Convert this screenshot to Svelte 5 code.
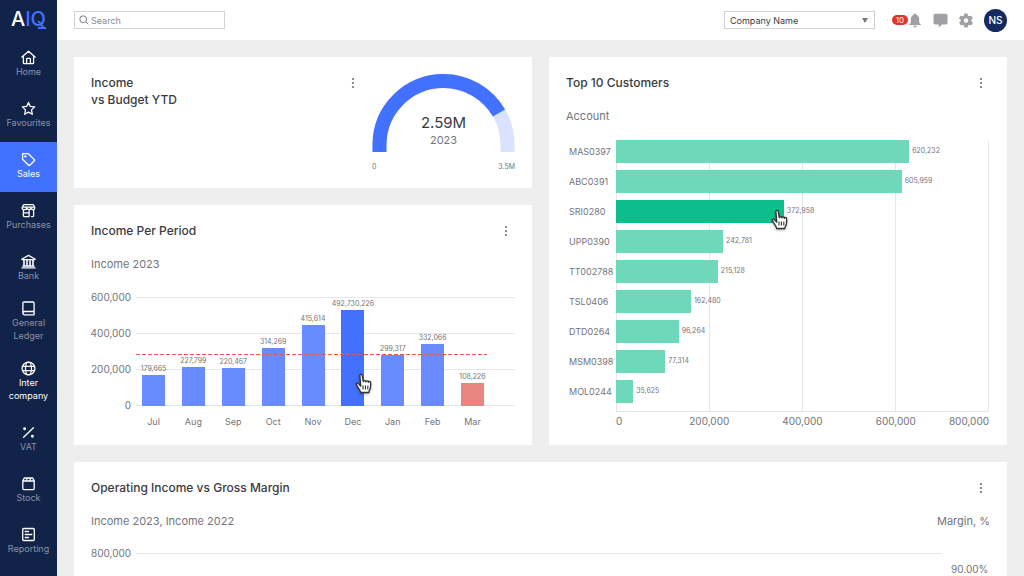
<script lang="ts">
	const navItems = [
		{ label: 'Home', icon: 'home' },
		{ label: 'Favourites', icon: 'star' },
		{ label: 'Sales', icon: 'tag', active: true },
		{ label: 'Purchases', icon: 'shop' },
		{ label: 'Bank', icon: 'bank' },
		{ label: 'General Ledger', icon: 'book', tall: true },
		{ label: 'Inter company', icon: 'globe', tall: true, bright: true },
		{ label: 'VAT', icon: 'percent' },
		{ label: 'Stock', icon: 'box' },
		{ label: 'Reporting', icon: 'report' }
	];

	// size is the share of the axis length, in percent
	const periods = [
		{ month: 'Jul', value: '179,665', size: 28 },
		{ month: 'Aug', value: '227,799', size: 36 },
		{ month: 'Sep', value: '220,467', size: 35 },
		{ month: 'Oct', value: '314,269', size: 53 },
		{ month: 'Nov', value: '415,614', size: 74 },
		{ month: 'Dec', value: '492,730,226', size: 88, hover: true },
		{ month: 'Jan', value: '299,317', size: 47 },
		{ month: 'Feb', value: '332,066', size: 57 },
		{ month: 'Mar', value: '108,226', size: 21, low: true }
	];

	const customers = [
		{ account: 'MAS0397', value: '620,232', size: 78.6 },
		{ account: 'ABC0391', value: '605,959', size: 76.6 },
		{ account: 'SRI0280', value: '372,958', size: 45, hover: true },
		{ account: 'UPP0390', value: '242,781', size: 28.7 },
		{ account: 'TT002788', value: '215,128', size: 27.3 },
		{ account: 'TSL0406', value: '162,480', size: 20.1 },
		{ account: 'DTD0264', value: '96,264', size: 16.8 },
		{ account: 'MSM0398', value: '77,314', size: 13.2 },
		{ account: 'MOL0244', value: '35,625', size: 4.6 }
	];

	const incomeTicks = ['600,000', '400,000', '200,000', '0'];
	const customerTicks = ['0', '200,000', '400,000', '600,000', '800,000'];
</script>

{#snippet menuButton(label: string)}
	<button class="menu" aria-label={label}>
		<svg width="4" height="12" viewBox="0 0 4 12" fill="#6e6e76">
			<circle cx="2" cy="2" r="1.1" />
			<circle cx="2" cy="6" r="1.1" />
			<circle cx="2" cy="10" r="1.1" />
		</svg>
	</button>
{/snippet}

{#snippet hand()}
	<svg class="hand" width="18" height="21" viewBox="0 0 18 21">
		<path
			d="M5.8 13.2 3.2 10.4c-.8-.9-2.2-.2-1.8.9.6 1.7 1.5 2.6 2.2 4 .7 1.5 2 2.5 2 4.2h8.2c0-1.8 1.3-2.8 1.6-4.8.2-1.6.3-3.4.2-5.2-.1-1.4-2-1.4-2.2-.2-.1-1.8-2.3-1.9-2.5-.4-.2-1.6-2.4-1.6-2.6-.2L7.2 2.4C6.8.8 4.6 1.2 4.9 2.8Z"
			fill="#fff"
			stroke="#333"
			stroke-width="1.3"
			stroke-linejoin="round"
		/>
		<path d="M8 12.4v4M10.4 12.4v4M12.8 12.4v4" stroke="#333" stroke-width="1.1" />
	</svg>
{/snippet}

<div class="app">
	<aside class="sidebar">
		<a class="logo" href="#home">A<span>IQ</span></a>
		<nav>
			{#each navItems as item}
				<a
					href="#{item.icon}"
					class="nav-item"
					class:active={item.active}
					class:tall={item.tall}
					class:bright={item.bright}
				>
					<svg width="15" height="15" viewBox="0 0 15 15" fill="none" stroke="currentColor" stroke-width="1.3" stroke-linejoin="round" stroke-linecap="round">
						{#if item.icon === 'home'}
							<path d="M.9 7 7.5 1.2 14.1 7M2.4 6v6.8q0 .9.9.9h8.4q.9 0 .9-.9V6M5.6 13.5V9.2q0-.8.8-.8h2.2q.8 0 .8.8v4.3" />
						{:else if item.icon === 'star'}
							<path d="m7.5 1.4 1.8 4 4.4.5-3.2 3 .8 4.4-3.8-2.2-3.8 2.2.8-4.4-3.2-3 4.4-.5Z" />
						{:else if item.icon === 'tag'}
							<path d="M1.6 2.4q0-.8.8-.8h4.4q.5 0 .9.4l5.6 5.6q.6.6 0 1.2l-4.5 4.5q-.6.6-1.2 0L2 7.7q-.4-.4-.4-.9Z" />
							<circle cx="4.4" cy="4.4" r=".5" />
						{:else if item.icon === 'shop'}
							<path d="M3.2 1.6h8.6q.6 0 .9.6l1.2 2.6q0 1.8-1.6 1.8-1.5 0-2-1.2-.6 1.2-2.2 1.2-1 0-1.8-1.2-.6 1.2-2.3 1.2-2.9.1-2.9-1.8l1.2-2.6q.3-.6.9-.6Z" />
							<path d="M1.8 4.2h11.4M5.4 4.2v1.4M9.6 4.2v1.4M2.4 6.6v6.2q0 .8.8.8h4.9V9.8H2.4M8.1 9.8V7.4M12.6 6.6v6.2q0 .8-.8.8h-1.2" />
						{:else if item.icon === 'bank'}
							<path d="M1 5 7.5 1.4 14 5v.6H1ZM1 13.9h13M2 12h11" />
							<path d="M3 6v5.6M6 6v5.6M9 6v5.6M12 6v5.6" stroke-width="1.6" />
						{:else if item.icon === 'book'}
							<path d="M1.9 12V2.2Q1.9 1 3.1 1h8.8q1.2 0 1.2 1.2v11.6H3.7q-1.8 0-1.8-1.8 0-1.5 1.8-1.5h9.4" />
						{:else if item.icon === 'globe'}
							<circle cx="7.5" cy="7.5" r="6.4" />
							<ellipse cx="7.5" cy="7.5" rx="3" ry="6.4" />
							<path d="M1.5 5.3h12M1.5 9.7h12" />
						{:else if item.icon === 'percent'}
							<path d="M2.6 12.3 12.4 2.7" />
							<circle cx="3.6" cy="3.8" r=".8" fill="currentColor" />
							<circle cx="11.4" cy="11.2" r=".8" fill="currentColor" />
						{:else if item.icon === 'box'}
							<path d="M1.8 4.9v7.7q0 1 1 1h9.4q1 0 1-1V4.9L11.7 2H3.3ZM1.8 5h11.4M5.8 2v3M9.2 2v3" />
						{:else}
							<rect x="1.7" y="1.5" width="11.6" height="12" rx="1" />
							<path d="M4.2 4.5h3.3M4.2 7.5h6.6M4.2 10.5h3.3" />
						{/if}
					</svg>
					<span>{item.label}</span>
				</a>
			{/each}
		</nav>
	</aside>

	<div class="page">
		<header class="topbar">
			<label class="search">
				<svg width="10" height="10" viewBox="0 0 10 10" fill="none" stroke="#77777f" stroke-width="1">
					<circle cx="4.2" cy="4.2" r="3.4" />
					<path d="m6.7 6.7 2.6 2.6" />
				</svg>
				<input type="text" placeholder="Search" aria-label="Search" />
			</label>

			<div class="company">
				<select aria-label="Company">
					<option>Company Name</option>
				</select>
				<svg width="6" height="5" viewBox="0 0 6 5"><path d="M0 0h6L3 5Z" fill="#77777f" /></svg>
			</div>

			<button class="icon-button" aria-label="Notifications">
				<span class="badge">10</span>
				<svg width="14" height="15" viewBox="0 0 14 15" fill="#a09fa5">
					<path d="M7 .6c.7 0 1.2.5 1.2 1.2 2 .6 3 2.3 3 4.4v3.2c0 .8 1.8 1.3 1.8 2.7H1c0-1.4 1.800-1.900 1.800-2.700V6.200c0-2.100 1-3.800 3-4.400C5.800 1.100 6.300.6 7 .6ZM5.200 12.800h3.600a1.800 1.600 0 0 1-3.600 0Z" />
				</svg>
			</button>
			<button class="icon-button" aria-label="Messages">
				<svg width="15" height="15" viewBox="0 0 15 15" fill="#a09fa5">
					<path d="M2.2.7h10.6q1.700 0 1.700 1.700v7.300q0 1.700-1.700 1.700H9l-3.300 3v-3H2.200q-1.700 0-1.700-1.700V2.400Q.5.7 2.200.7Z" />
				</svg>
			</button>
			<button class="icon-button" aria-label="Settings">
				<svg width="14" height="15" viewBox="2 2 20 20" fill="#a09fa5">
					<path d="M19.4 13a7.5 7.5 0 0 0 0-2l2.1-1.6c.2-.1.2-.4.1-.6l-2-3.5c-.1-.2-.4-.3-.6-.2l-2.5 1a7.300 7.300 0 0 0-1.700-1l-.4-2.600a.5.5 0 0 0-.5-.5h-4a.5.5 0 0 0-.5.5L9 5.100a7.600 7.600 0 0 0-1.700 1l-2.500-1c-.2-.1-.5 0-.6.2l-2 3.500c-.1.2-.1.5.1.6L4.500 11a7.900 7.900 0 0 0 0 2l-2.100 1.600c-.2.1-.2.4-.1.6l2 3.500c.1.2.4.3.6.2l2.500-1c.5.4 1.100.7 1.700 1l.4 2.600c0 .3.2.5.5.5h4c.3 0 .5-.2.5-.5l.4-2.600a7.300 7.300 0 0 0 1.700-1l2.500 1c.2.1.5 0 .6-.2l2-3.500c.1-.2.1-.5-.1-.6ZM12 15.200a3.200 3.200 0 1 1 0-6.400 3.200 3.200 0 0 1 0 6.400Z" />
				</svg>
			</button>
			<button class="avatar">NS</button>
		</header>

		<main>
			<section class="card budget">
				<h2>Income<br />vs Budget YTD</h2>
				{@render menuButton('Income vs Budget options')}
				<div class="gauge">
					<svg width="143" height="78" viewBox="0 0 143 78" fill="none" stroke-width="14">
						<path d="M7.5 78v-7a64 64 0 0 1 128 0v7" stroke="#d9e2ff" />
						<path d="M7.5 78v-7a64 64 0 0 1 128 0v7" stroke="#4270ff" pathLength="100" stroke-dasharray="81.2 100" />
					</svg>
					<div class="reading">
						<strong>2.59M</strong>
						<span>2023</span>
					</div>
					<div class="range"><span>0</span><span>3.5M</span></div>
				</div>
			</section>

			<section class="card customers">
				<div class="card-head">
					<h2>Top 10 Customers</h2>
					{@render menuButton('Top 10 Customers options')}
				</div>
				<p class="subtitle">Account</p>
				<div class="customer-chart">
					<div class="accounts">
						{#each customers as customer}
							<span>{customer.account}</span>
						{/each}
					</div>
					<div class="plot">
						<div class="columns">
							{#each customerTicks as _}<i></i>{/each}
						</div>
						<div class="rows">
							{#each customers as customer}
								<div class="row">
									<div class="hbar" class:hover={customer.hover} style="width: {customer.size}%">
										{#if customer.hover}{@render hand()}{/if}
									</div>
									<span>{customer.value}</span>
								</div>
							{/each}
						</div>
					</div>
					<div class="x-axis">
						{#each customerTicks as tick}<span>{tick}</span>{/each}
					</div>
				</div>
			</section>

			<section class="card income">
				<div class="card-head">
					<h2>Income Per Period</h2>
					{@render menuButton('Income Per Period options')}
				</div>
				<p class="subtitle">Income 2023</p>
				<div class="income-chart">
					<div class="y-axis">
						{#each incomeTicks as tick}<span>{tick}</span>{/each}
					</div>
					<div class="plot">
						<div class="lines">
							{#each incomeTicks as _}<i></i>{/each}
						</div>
						<div class="bars">
							{#each periods as period}
								<div class="bar-slot">
									<span>{period.value}</span>
									<div class="bar" class:hover={period.hover} class:low={period.low} style="height: {period.size}%">
										{#if period.hover}{@render hand()}{/if}
									</div>
								</div>
							{/each}
						</div>
						<div class="average"></div>
					</div>
					<div class="months">
						{#each periods as period}<span>{period.month}</span>{/each}
					</div>
				</div>
			</section>

			<section class="card margin">
				<div class="card-head">
					<h2>Operating Income vs Gross Margin</h2>
					{@render menuButton('Operating Income options')}
				</div>
				<div class="legend">
					<p class="subtitle">Income 2023, Income 2022</p>
					<p class="subtitle">Margin, %</p>
				</div>
				<div class="margin-chart">
					<span>800,000</span>
					<i></i>
					<span class="percent">90.00%</span>
				</div>
			</section>
		</main>
	</div>
</div>

<style>
	:global(body) {
		background: #eee;
	}

	.app {
		display: flex;
		height: 100vh;
		overflow: hidden;
		font-family: Inter, 'Liberation Sans', sans-serif;
		font-size: 9px;
		line-height: 13px;
		color: #74747b;
	}

	a {
		text-decoration: none;
	}

	button,
	input,
	select {
		font: inherit;
		color: inherit;
		background: none;
		border: none;
		padding: 0;
		margin: 0;
	}

	h2,
	p {
		margin: 0;
		line-height: 17px;
		font-weight: 400;
	}

	h2 {
		font-size: 12px;
		font-weight: 500;
		color: #3b3b3f;
	}

	.subtitle {
		font-size: 11px;
	}

	.sidebar {
		flex: 0 0 57px;
		background: #12234a;
	}

	.logo {
		position: relative;
		display: flex;
		justify-content: center;
		height: 40px;
		font-size: 20px;
		line-height: 39px;
		font-weight: 500;
		color: #fff;
	}

	.logo span {
		color: #4270ff;
	}

	.logo::after {
		content: '';
		position: absolute;
		right: 11px;
		top: 27px;
		width: 8px;
		height: 2px;
		background: #4270ff;
	}

	nav {
		display: flex;
		flex-direction: column;
		gap: 1px;
	}

	.nav-item {
		display: flex;
		flex-direction: column;
		align-items: center;
		padding: 10px 0 12px;
		text-align: center;
		color: #fff;
	}

	.nav-item span {
		color: #8b93a8;
	}

	.nav-item.tall {
		padding: 6px 4px 12px;
	}

	.nav-item.active {
		background: #4270ff;
	}

	.nav-item.active span,
	.nav-item.bright span {
		color: #fff;
	}

	.page {
		flex: 1;
		min-width: 0;
	}

	.topbar {
		display: flex;
		align-items: center;
		box-sizing: border-box;
		height: 40px;
		padding: 0 17px;
		background: #fff;
	}

	.search,
	.company {
		display: flex;
		align-items: center;
		box-sizing: border-box;
		width: 151px;
		height: 18px;
		border: 1px solid #d2d2d5;
	}

	.search {
		gap: 2px;
		padding-left: 4px;
		margin-right: auto;
	}

	.search input {
		flex: 1;
		min-width: 0;
		outline: none;
	}

	.search input::placeholder {
		color: #8a8a92;
		opacity: 1;
	}

	.company {
		padding: 0 6px 0 5px;
		margin-right: 17px;
		color: #3b3b3f;
	}

	.company select {
		flex: 1;
		appearance: none;
	}

	.icon-button {
		display: flex;
		align-items: center;
		margin-right: 11px;
	}

	.badge {
		width: 16px;
		height: 10px;
		border-radius: 5px;
		background: #e0352f;
		color: #fff;
		font-size: 8px;
		line-height: 10px;
		text-align: center;
	}

	.avatar {
		width: 23px;
		height: 23px;
		border-radius: 50%;
		background: #152a5e;
		color: #fff;
		font-size: 10px;
		font-weight: 500;
	}

	main {
		display: grid;
		grid-template-columns: 1fr 1fr;
		gap: 17px;
		padding: 17px;
	}

	.card {
		padding: 17px;
		background: #fff;
	}

	.card-head,
	.legend {
		display: flex;
		justify-content: space-between;
	}

	.card-head {
		padding-right: 7px;
		margin-bottom: 17px;
	}

	.menu {
		display: flex;
		align-items: center;
		height: 17px;
	}

	.budget {
		display: flex;
		align-items: flex-start;
	}

	.budget h2 {
		flex: 1;
	}

	.budget .menu {
		margin-right: 17px;
	}

	.gauge {
		display: grid;
	}

	.gauge svg,
	.reading {
		grid-area: 1 / 1;
	}

	.reading {
		display: flex;
		flex-direction: column;
		align-items: center;
		justify-content: flex-end;
		padding-bottom: 3px;
		font-size: 11px;
		line-height: 17px;
	}

	.reading strong {
		font-size: 15px;
		line-height: 19px;
		font-weight: 400;
		color: #3b3b3f;
	}

	.range {
		display: flex;
		justify-content: space-between;
		padding-top: 10px;
		font-size: 7px;
		line-height: 9px;
	}

	.plot {
		display: grid;
	}

	.plot > * {
		grid-area: 1 / 1;
	}

	i {
		background: #e6e6e8;
	}

	.customers {
		grid-column: 2;
		grid-row: 1 / 3;
	}

	.customer-chart {
		display: grid;
		grid-template-columns: 50px 1fr;
		row-gap: 3px;
		margin-top: 15px;
		padding-right: 1px;
	}

	.accounts,
	.rows {
		display: flex;
		flex-direction: column;
		gap: 7px;
	}

	.accounts {
		padding-left: 3px;
		line-height: 23px;
	}

	.columns {
		display: flex;
		justify-content: space-between;
		border-bottom: 1px solid #e6e6e8;
	}

	.columns i {
		width: 1px;
	}

	.rows {
		padding-bottom: 9px;
	}

	.row {
		display: flex;
		gap: 3px;
		font-size: 7px;
		line-height: 22px;
	}

	.hbar {
		position: relative;
		height: 23px;
		background: #6ed9ba;
	}

	.hbar.hover {
		background: #0cbe8b;
	}

	.hbar .hand {
		right: -5px;
		top: 9px;
	}

	.x-axis {
		grid-column: 2;
		display: flex;
		font-size: 10px;
		line-height: 12px;
		text-align: center;
	}

	/* the end labels take half a step, so the others sit under their lines */
	.x-axis span {
		flex: 2 1 0;
	}

	.x-axis span:first-child {
		flex-grow: 1;
		text-align: left;
	}

	.x-axis span:last-child {
		flex-grow: 1;
		text-align: right;
	}

	.income-chart {
		display: grid;
		grid-template-columns: 40px 1fr;
		column-gap: 5px;
		row-gap: 9px;
		margin-top: 24px;
	}

	.y-axis,
	.lines {
		display: flex;
		flex-direction: column;
		justify-content: space-between;
		height: 109px;
	}

	.y-axis {
		align-items: flex-end;
		font-size: 10px;
	}

	.y-axis span {
		height: 1px;
		line-height: 1px;
	}

	.lines i {
		height: 1px;
	}

	.bars,
	.months {
		display: flex;
		justify-content: space-between;
		padding: 0 31px 0 6px;
	}

	.bar-slot,
	.months span {
		display: flex;
		flex-direction: column;
		align-items: center;
		justify-content: flex-end;
		width: 23px;
	}

	.bar-slot {
		font-size: 7px;
		line-height: 12px;
	}

	.bar {
		position: relative;
		width: 100%;
		background: #688cff;
	}

	.bar.hover {
		background: #4270ff;
	}

	.bar.low {
		background: #e98580;
	}

	.bar .hand {
		left: 14px;
		bottom: 12px;
	}

	.hand {
		position: absolute;
		z-index: 1;
		filter: drop-shadow(0 1px 1px rgba(0, 0, 0, 0.35));
	}

	.average {
		z-index: 0;
		height: 1px;
		margin: 57px 28px 0 0;
		background: repeating-linear-gradient(90deg, #ec544e 0 4px, transparent 4px 6px);
	}

	.months {
		grid-column: 2;
	}

	.margin {
		grid-column: 1 / 3;
		height: 300px;
	}

	.margin-chart {
		display: grid;
		grid-template-columns: 40px 1fr 38px;
		column-gap: 5px;
		align-items: center;
		margin-top: 17px;
		padding-right: 1px;
		font-size: 10px;
		text-align: right;
	}

	.margin-chart i {
		height: 1px;
		margin-right: 4px;
	}

	.percent {
		padding: 16px 2px 0 0;
		margin-bottom: -16px;
	}
</style>
